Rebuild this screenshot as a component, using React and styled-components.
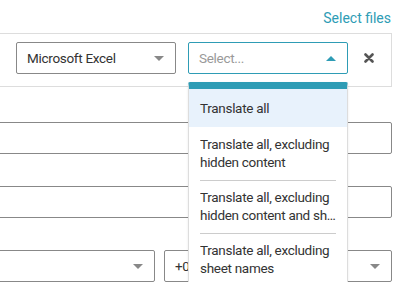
import React from "react";
import styled, { createGlobalStyle } from "styled-components";

const teal = "#2e9cb5";

const GlobalStyle = createGlobalStyle`
  body {
    margin: 0;
    background: #fff;
    font-family: "Roboto", "Liberation Sans", sans-serif;
    color: #333;
    overflow: hidden;
  }
`;

const Page = styled.div`
  width: 432px;
  margin-left: -40px;
  box-sizing: border-box;
  font-size: 13.5px;
  letter-spacing: -0.3px;
`;

const Header = styled.div`
  height: 33px;
  display: flex;
  justify-content: flex-end;
  align-items: flex-end;
  padding-right: 1px;
  padding-bottom: 7px;
  box-sizing: border-box;
`;

const Link = styled.a`
  color: ${teal};
  font-size: 14px;
  letter-spacing: 0;
  text-decoration: none;
  cursor: pointer;
`;

const Panel = styled.div`
  width: 432px;
  height: 54px;
  box-sizing: border-box;
  border: 1px solid #ddd;
  display: flex;
  align-items: flex-start;
  padding: 8px 0 0 55px;
  gap: 12px;
`;

const SelectBox = styled.div`
  position: relative;
  width: ${({ width }) => width || 160}px;
  height: 32px;
  box-sizing: border-box;
  border: 1px solid ${({ focused }) => (focused ? teal : "#888")};
  border-radius: 2px;
  display: flex;
  align-items: center;
  justify-content: space-between;
  padding: 0 11px 0 10px;
  color: ${({ placeholder }) => (placeholder ? "#999" : "#333")};
  background: #fff;
  white-space: nowrap;
`;

const Caret = styled.span`
  width: 0;
  height: 0;
  border-left: 5px solid transparent;
  border-right: 5px solid transparent;
  ${({ up }) =>
    up
      ? `border-bottom: 5px solid ${teal};`
      : `border-top: 5px solid #888;`}
`;

const ClearButton = styled.button`
  border: none;
  background: none;
  padding: 0;
  margin-left: -6px;
  height: 32px;
  width: 30px;
  display: flex;
  align-items: center;
  justify-content: center;
`;

const Menu = styled.ul`
  position: absolute;
  top: 39px;
  left: -1px;
  width: 160px;
  margin: 0;
  padding: 0;
  list-style: none;
  background: #fff;
  border: 1px solid #ddd;
  border-top: 7px solid ${teal};
  border-radius: 2px;
  box-sizing: border-box;
  box-shadow: 0 1px 3px rgba(0, 0, 0, 0.08);
  z-index: 5;
`;

const MenuItem = styled.li`
  position: relative;
  padding: ${({ single }) => (single ? "10px 11px 10px" : "8px 11px 9px")};
  line-height: 18px;
  color: #333;
  background: ${({ active }) => (active ? "#e8f2fc" : "#fff")};

  & + &::before {
    content: "";
    position: absolute;
    top: 0;
    left: 11px;
    right: 11px;
    border-top: 1px solid #ccc;
  }
`;

const Clip = styled.span`
  display: block;
  overflow: hidden;
  text-overflow: ellipsis;
  white-space: nowrap;
`;

const Form = styled.div`
  display: flex;
  flex-direction: column;
  gap: 32px;
  padding-top: 35px;
`;

const Input = styled.div`
  width: 432px;
  height: 32px;
  box-sizing: border-box;
  border: 1px solid #888;
  border-radius: 2px;
`;

const Row = styled.div`
  display: flex;
  gap: 9px;
`;

const items = [
  { text: "Translate all", single: true },
  { text: ["Translate all, excluding", "hidden content"] },
  { text: ["Translate all, excluding", "hidden content and sheet names"] },
  { text: ["Translate all, excluding", "sheet names"] },
];

function XIcon() {
  return (
    <svg width="10" height="10" viewBox="0 0 10 10">
      <path
        d="M1.5 1.5 L8.5 8.5 M8.5 1.5 L1.5 8.5"
        stroke="#555"
        strokeWidth="2.6"
        strokeLinecap="round"
      />
    </svg>
  );
}

export default function App() {
  return (
    <Page>
      <GlobalStyle />
      <Header>
        <Link>Select files</Link>
      </Header>
      <Panel>
        <SelectBox>
          Microsoft Excel
          <Caret />
        </SelectBox>
        <SelectBox focused placeholder>
          Select...
          <Caret up />
          <Menu>
            {items.map((item, i) => (
              <MenuItem key={i} active={i === 0} single={item.single}>
                {item.single ? (
                  item.text
                ) : (
                  <>
                    <Clip>{item.text[0]}</Clip>
                    <Clip>{item.text[1]}</Clip>
                  </>
                )}
              </MenuItem>
            ))}
          </Menu>
        </SelectBox>
        <ClearButton>
          <XIcon />
        </ClearButton>
      </Panel>
      <Form>
        <Input />
        <Input />
        <Row>
          <SelectBox width={195}>
            <span />
            <Caret />
          </SelectBox>
          <SelectBox width={228}>
            +00:00 UTC
            <Caret />
          </SelectBox>
        </Row>
      </Form>
    </Page>
  );
}
